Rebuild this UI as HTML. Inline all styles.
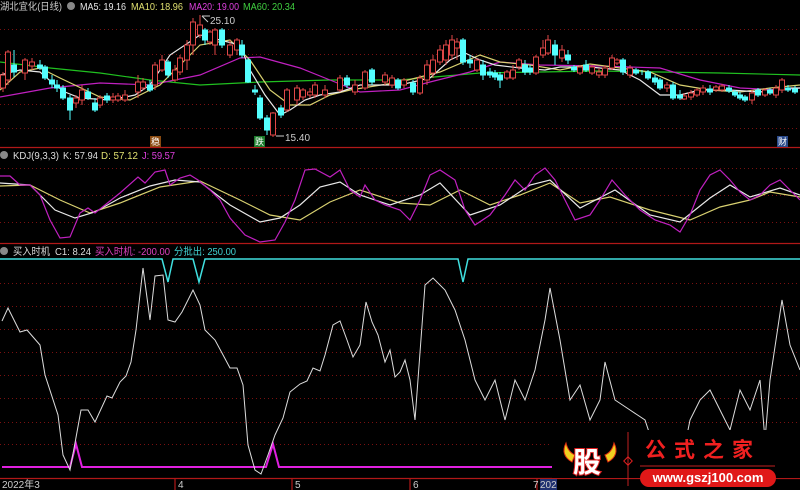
<!DOCTYPE html>
<html><head><meta charset="utf-8"><style>
body{margin:0;background:#000;width:800px;height:490px;overflow:hidden}
svg{display:block}
text{font-family:"Liberation Sans","Noto Sans CJK SC",sans-serif;font-size:10px}
</style></head><body>
<svg width="800" height="490" viewBox="0 0 800 490">
<rect width="800" height="490" fill="#000"/>
<g stroke="#7a1010" stroke-dasharray="1,3" stroke-width="1">
<line x1="0" y1="29.5" x2="800" y2="29.5"/><line x1="0" y1="54.5" x2="800" y2="54.5"/><line x1="0" y1="104.5" x2="800" y2="104.5"/><line x1="0" y1="128.5" x2="800" y2="128.5"/>
<line x1="0" y1="168.5" x2="800" y2="168.5"/><line x1="0" y1="195.5" x2="800" y2="195.5"/><line x1="0" y1="222.5" x2="800" y2="222.5"/>
<line x1="0" y1="283.5" x2="800" y2="283.5"/><line x1="0" y1="306.5" x2="800" y2="306.5"/><line x1="0" y1="329.5" x2="800" y2="329.5"/><line x1="0" y1="352.5" x2="800" y2="352.5"/><line x1="0" y1="375.5" x2="800" y2="375.5"/><line x1="0" y1="398.5" x2="800" y2="398.5"/><line x1="0" y1="422.5" x2="800" y2="422.5"/><line x1="0" y1="444.5" x2="800" y2="444.5"/>
</g>
<g stroke="#b01818" stroke-width="1.2">
<line x1="0" y1="147.5" x2="800" y2="147.5"/><line x1="0" y1="243.5" x2="800" y2="243.5"/><line x1="0" y1="478.5" x2="800" y2="478.5"/>
<line x1="175" y1="478" x2="175" y2="490"/><line x1="292" y1="478" x2="292" y2="490"/><line x1="410" y1="478" x2="410" y2="490"/><line x1="537" y1="478" x2="537" y2="490"/>
</g>
<g fill="none" stroke-width="1.2">
<polyline stroke="#20c020" points="0,62 50,68 100,73 150,80 200,85 260,82 330,80 400,80 480,73 540,72 600,71 660,72 720,73 800,75"/>
<polyline stroke="#c020c0" points="0,97 50,88 100,83 150,85 200,75 240,58 260,57 300,68 330,80 360,92 400,90 430,82 470,72 500,62 540,65 600,66 660,68 700,80 740,88 780,90 800,88"/>
<polyline stroke="#d8d070" points="0,90 20,72 40,68 60,78 100,97 130,100 160,85 180,65 200,45 230,40 250,60 270,90 290,105 310,105 330,95 350,90 400,82 440,72 480,55 500,62 530,65 560,70 590,64 620,68 650,72 680,85 710,90 740,92 770,88 800,85"/>
<polyline stroke="#e8e8e8" points="0,75 20,70 40,72 55,85 65,92 80,98 110,100 135,95 150,85 170,55 200,35 220,40 240,45 250,70 265,95 280,115 290,110 305,100 320,95 340,92 360,85 400,85 430,78 450,60 465,53 480,60 495,65 520,68 545,70 560,67 590,67 620,70 640,80 660,95 680,95 700,90 730,90 760,92 790,88 800,88"/>
</g>
<g stroke="#e04848" fill="#000" stroke-width="1">
<path d="M3 72V92M8 50V85M25 58V80M32 58V70M76 95V108M82 85V105M100 95V108M113 93V103M118 93V102M125 90V102M138 75V98M143 78V90M155 62V90M162 55V72M175 65V82M180 55V75M187 40V70M193 18V55M200 15V38M210 30V45M215 28V55M230 40V58M237 38V55M273 112V137M287 88V112M297 85V105M303 88V100M310 88V98M315 82V98M325 85V98M340 75V92M355 80V95M365 70V90M385 72V85M392 75V88M404 78V88M420 75V95M427 60V85M433 55V78M440 45V65M446 40V65M452 35V60M457 38V60M477 58V72M507 70V80M513 65V80M519 58V70M536 55V75M543 40V58M548 35V55M562 45V62M580 65V75M592 65V75M599 68V78M605 65V78M612 55V70M617 58V65M630 65V78M667 82V92M684 93V100M691 90V100M697 88V97M703 85V95M716 85V92M722 84V92M752 90V104M765 88V97M776 85V98M782 78V93"/>
<rect x="0.5" y="75" width="5" height="13"/><rect x="5.5" y="52" width="5" height="28"/><rect x="22.5" y="60" width="5" height="13"/><rect x="29.5" y="62" width="5" height="4"/><rect x="73.5" y="98" width="5" height="5"/><rect x="79.5" y="90" width="5" height="10"/><rect x="97.5" y="98" width="5" height="7"/><rect x="110.5" y="97" width="5" height="3"/><rect x="115.5" y="96" width="5" height="4"/><rect x="122.5" y="95" width="5" height="5"/><rect x="135.5" y="82" width="5" height="10"/><rect x="140.5" y="82" width="5" height="6"/><rect x="152.5" y="65" width="5" height="20"/><rect x="159.5" y="60" width="5" height="10"/><rect x="172.5" y="70" width="5" height="10"/><rect x="177.5" y="58" width="5" height="14"/><rect x="184.5" y="45" width="5" height="15"/><rect x="190.5" y="22" width="5" height="23"/><rect x="197.5" y="25" width="5" height="10"/><rect x="207.5" y="32" width="5" height="10"/><rect x="212.5" y="30" width="5" height="15"/><rect x="227.5" y="45" width="5" height="10"/><rect x="234.5" y="40" width="5" height="10"/><rect x="270.5" y="113" width="5" height="22"/><rect x="284.5" y="90" width="5" height="20"/><rect x="294.5" y="88" width="5" height="12"/><rect x="300.5" y="90" width="5" height="7"/><rect x="307.5" y="92" width="5" height="3"/><rect x="312.5" y="85" width="5" height="10"/><rect x="322.5" y="90" width="5" height="5"/><rect x="337.5" y="78" width="5" height="12"/><rect x="352.5" y="85" width="5" height="7"/><rect x="362.5" y="72" width="5" height="16"/><rect x="382.5" y="75" width="5" height="7"/><rect x="389.5" y="78" width="5" height="7"/><rect x="401.5" y="80" width="5" height="5"/><rect x="417.5" y="78" width="5" height="15"/><rect x="424.5" y="65" width="5" height="15"/><rect x="430.5" y="60" width="5" height="13"/><rect x="437.5" y="50" width="5" height="12"/><rect x="443.5" y="45" width="5" height="15"/><rect x="449.5" y="40" width="5" height="15"/><rect x="454.5" y="42" width="5" height="6"/><rect x="474.5" y="60" width="5" height="10"/><rect x="504.5" y="72" width="5" height="6"/><rect x="510.5" y="70" width="5" height="8"/><rect x="516.5" y="60" width="5" height="7"/><rect x="533.5" y="57" width="5" height="16"/><rect x="540.5" y="48" width="5" height="7"/><rect x="545.5" y="40" width="5" height="13"/><rect x="559.5" y="50" width="5" height="8"/><rect x="577.5" y="67" width="5" height="6"/><rect x="589.5" y="67" width="5" height="6"/><rect x="596.5" y="72" width="5" height="3"/><rect x="602.5" y="68" width="5" height="7"/><rect x="609.5" y="58" width="5" height="10"/><rect x="614.5" y="60" width="5" height="3"/><rect x="627.5" y="68" width="5" height="7"/><rect x="664.5" y="85" width="5" height="3"/><rect x="681.5" y="96" width="5" height="3"/><rect x="688.5" y="93" width="5" height="4"/><rect x="694.5" y="90" width="5" height="5"/><rect x="700.5" y="88" width="5" height="4"/><rect x="713.5" y="87" width="5" height="3"/><rect x="719.5" y="86" width="5" height="4"/><rect x="749.5" y="93" width="5" height="7"/><rect x="762.5" y="90" width="5" height="5"/><rect x="773.5" y="88" width="5" height="7"/><rect x="779.5" y="80" width="5" height="10"/>
</g>
<g stroke="#54ffff" fill="#54ffff" stroke-width="1">
<path d="M14 50V77M40 60V70M45 65V80M52 75V88M57 80V92M63 85V100M70 95V120M88 88V100M95 98V112M107 93V103M150 80V92M168 60V78M205 28V45M222 28V48M242 40V58M248 58V83M255 85V95M260 95V120M267 115V135M281 105V118M347 75V88M372 68V85M398 78V90M413 80V95M463 38V65M470 55V68M483 60V80M490 68V78M495 70V80M500 72V88M525 60V75M530 65V75M555 40V65M568 50V64M574 65V72M586 60V72M623 58V75M636 68V75M642 70V75M648 70V80M655 75V85M660 78V90M673 82V100M680 90V100M710 85V95M729 85V93M735 90V97M740 92V100M745 95V102M758 88V97M770 88V95M788 85V92M795 86V94"/>
<rect x="11.5" y="65" width="5" height="7"/><rect x="37.5" y="65" width="5" height="3"/><rect x="42.5" y="67" width="5" height="11"/><rect x="49.5" y="80" width="5" height="4"/><rect x="54.5" y="85" width="5" height="3"/><rect x="60.5" y="88" width="5" height="10"/><rect x="67.5" y="98" width="5" height="12"/><rect x="85.5" y="92" width="5" height="6"/><rect x="92.5" y="103" width="5" height="7"/><rect x="104.5" y="96" width="5" height="4"/><rect x="147.5" y="85" width="5" height="5"/><rect x="165.5" y="62" width="5" height="13"/><rect x="202.5" y="30" width="5" height="10"/><rect x="219.5" y="30" width="5" height="15"/><rect x="239.5" y="45" width="5" height="10"/><rect x="245.5" y="60" width="5" height="22"/><rect x="252.5" y="90" width="5" height="2"/><rect x="257.5" y="98" width="5" height="20"/><rect x="264.5" y="118" width="5" height="12"/><rect x="278.5" y="108" width="5" height="7"/><rect x="344.5" y="78" width="5" height="7"/><rect x="369.5" y="70" width="5" height="12"/><rect x="395.5" y="80" width="5" height="8"/><rect x="410.5" y="83" width="5" height="9"/><rect x="460.5" y="40" width="5" height="22"/><rect x="467.5" y="60" width="5" height="3"/><rect x="480.5" y="65" width="5" height="10"/><rect x="487.5" y="72" width="5" height="3"/><rect x="492.5" y="73" width="5" height="4"/><rect x="497.5" y="75" width="5" height="5"/><rect x="522.5" y="65" width="5" height="7"/><rect x="527.5" y="68" width="5" height="4"/><rect x="552.5" y="45" width="5" height="10"/><rect x="565.5" y="55" width="5" height="5"/><rect x="571.5" y="67" width="5" height="3"/><rect x="583.5" y="65" width="5" height="5"/><rect x="620.5" y="60" width="5" height="12"/><rect x="633.5" y="70" width="5" height="3"/><rect x="645.5" y="72" width="5" height="6"/><rect x="652.5" y="78" width="5" height="4"/><rect x="657.5" y="80" width="5" height="8"/><rect x="670.5" y="85" width="5" height="13"/><rect x="677.5" y="95" width="5" height="3"/><rect x="707.5" y="89" width="5" height="3"/><rect x="726.5" y="88" width="5" height="3"/><rect x="732.5" y="92" width="5" height="3"/><rect x="737.5" y="95" width="5" height="3"/><rect x="742.5" y="97" width="5" height="3"/><rect x="755.5" y="90" width="5" height="5"/><rect x="767.5" y="90" width="5" height="3"/><rect x="785.5" y="88" width="5" height="2"/><rect x="792.5" y="89" width="5" height="3"/>
</g>
<g fill="#ccc" stroke="#ccc">
<path d="M202 16L208 22M202 16H210" fill="none"/><text x="210" y="24" stroke="none">25.10</text>
<path d="M276 136H284" fill="none"/><text x="285" y="141" stroke="none">15.40</text>
</g>
<rect x="150" y="136" width="11" height="11" fill="#8a4a10"/><text x="151" y="145" fill="#fff" style="font-size:9px">稳</text>
<rect x="254" y="136" width="11" height="11" fill="#1a7a2a"/><text x="255" y="145" fill="#fff" style="font-size:9px">跌</text>
<rect x="777" y="136" width="11" height="11" fill="#2a4a8a"/><text x="778" y="145" fill="#fff" style="font-size:9px">财</text>
<text x="0" y="10" fill="#ccc" textLength="62" lengthAdjust="spacingAndGlyphs">湖北宜化(日线)</text><circle cx="71" cy="6" r="4" fill="#888"/>
<text x="80" y="10" fill="#e8e8e8" textLength="46" lengthAdjust="spacingAndGlyphs">MA5: 19.16</text><text x="131" y="10" fill="#e0e070" textLength="52" lengthAdjust="spacingAndGlyphs">MA10: 18.96</text><text x="189" y="10" fill="#e040e0" textLength="50" lengthAdjust="spacingAndGlyphs">MA20: 19.00</text><text x="243" y="10" fill="#40d040" textLength="52" lengthAdjust="spacingAndGlyphs">MA60: 20.34</text>
<circle cx="4" cy="155" r="4" fill="#888"/><text x="13" y="159" fill="#ddd" textLength="46" lengthAdjust="spacingAndGlyphs">KDJ(9,3,3)</text><text x="63" y="159" fill="#ddd" textLength="35" lengthAdjust="spacingAndGlyphs">K: 57.94</text><text x="101" y="159" fill="#e0e070" textLength="37" lengthAdjust="spacingAndGlyphs">D: 57.12</text><text x="142" y="159" fill="#e040e0" textLength="33" lengthAdjust="spacingAndGlyphs">J: 59.57</text>
<circle cx="4" cy="251" r="4" fill="#888"/><text x="13" y="255" fill="#ddd" textLength="37" lengthAdjust="spacingAndGlyphs">买入时机</text><text x="55" y="255" fill="#ddd" textLength="36" lengthAdjust="spacingAndGlyphs">C1: 8.24</text><text x="95" y="255" fill="#e040c0" textLength="75" lengthAdjust="spacingAndGlyphs">买入时机: -200.00</text><text x="174" y="255" fill="#40d0d0" textLength="62" lengthAdjust="spacingAndGlyphs">分批出: 250.00</text>
<g fill="none" stroke-width="1.2">
<polyline stroke="#d8d070" points="0,186 30,185 60,200 90,213 120,203 160,187 200,181 240,200 270,215 300,220 330,202 360,190 400,203 430,205 460,190 490,205 520,195 550,183 580,203 610,197 650,210 690,220 720,207 750,200 770,192 800,197"/>
<polyline stroke="#e8e8e8" points="0,183 30,185 55,210 75,218 95,212 120,198 150,186 175,180 200,182 230,205 260,222 280,218 300,205 320,187 340,182 360,195 390,205 420,195 440,183 470,215 500,205 530,185 550,180 580,208 615,190 650,215 680,222 710,198 730,185 750,197 780,188 800,195"/>
<polyline stroke="#c020c0" points="0,176 10,176 20,185 30,185 40,195 50,220 60,238 70,237 80,213 88,208 95,213 105,205 120,193 138,177 145,183 155,172 165,170 170,185 180,178 190,175 198,180 210,190 220,200 230,218 245,235 260,242 275,240 285,222 295,200 305,170 315,169 330,177 340,170 350,190 360,197 365,185 375,200 385,205 400,210 410,220 420,200 430,175 440,170 455,180 465,210 475,225 490,215 505,195 515,180 525,190 535,175 545,168 555,180 565,200 575,220 590,215 600,200 612,180 625,195 640,210 655,220 670,225 680,232 690,215 700,190 710,175 720,170 730,180 740,192 750,200 760,195 770,185 780,180 790,190 800,200"/>
</g>
<polyline fill="none" stroke="#40e0e0" stroke-width="1.5" points="0,259 162,259 168,282 173,259 193,259 199,282 205,259 458,259 463,282 468,259 800,259"/>
<polyline fill="none" stroke="#e020e0" stroke-width="2" points="2,467 70,467 76,444 82,467 266,467 273,444 279,467 553,467"/>
<polyline fill="none" stroke="#ddd" stroke-width="1" points="2,321 8,308 20,332 27,330 40,345 45,375 58,415 63,455 70,470 75,443 81,410 88,410 95,422 107,396 112,398 120,382 126,376 131,362 136,330 143,268 150,320 155,276 163,275 168,320 175,322 182,312 193,290 200,305 205,330 215,340 222,353 230,368 237,368 243,385 248,445 255,470 261,474 268,455 275,435 283,418 290,392 300,384 307,381 313,368 320,371 325,355 333,325 340,321 347,340 353,357 360,345 366,302 372,322 378,335 385,362 390,350 395,377 400,372 405,360 410,380 415,420 425,285 433,278 445,290 455,310 465,340 475,380 485,400 495,380 505,420 515,380 525,400 535,370 545,320 550,288 560,340 570,400 580,385 590,420 600,400 605,362 615,400 630,410 645,420 655,450 670,460 680,470 690,420 700,400 710,390 720,410 730,430 740,390 750,410 760,380 765,440 770,380 782,300 790,345 800,370"/>
<text x="2" y="488" fill="#ccc">2022年3</text><text x="178" y="488" fill="#ccc">4</text><text x="295" y="488" fill="#ccc">5</text><text x="413" y="488" fill="#ccc">6</text><text x="533" y="488" fill="#ccc">7</text><rect x="540" y="479" width="17" height="11" fill="#203070"/><text x="540" y="488" fill="#ccc">202</text>
<rect x="552" y="430" width="248" height="48" fill="#000"/>
<path d="M566 443Q560 455 572 462L575 455Q568 452 566 443Z M614 443Q620 455 608 462L605 455Q612 452 614 443Z" fill="#f0d020" stroke="#e03010"/>
<text x="573" y="472" fill="#fff" stroke="#e02020" stroke-width="2" paint-order="stroke" style="font-size:28px;font-weight:bold">股</text>
<line x1="628" y1="432" x2="628" y2="486" stroke="#c02020"/><rect x="625" y="458" width="6" height="6" transform="rotate(45 628 461)" fill="none" stroke="#e02020"/>
<text x="645" y="457" fill="#f02020" style="font-size:21px;font-weight:bold;letter-spacing:8px">公式之家</text>
<line x1="640" y1="466" x2="775" y2="466" stroke="#c02020"/>
<rect x="640" y="469" width="136" height="18" rx="9" fill="#e01818"/>
<text x="708" y="482" fill="#fff" text-anchor="middle" style="font-size:13px;font-weight:bold">www.gszj100.com</text>
</svg>
</body></html>
